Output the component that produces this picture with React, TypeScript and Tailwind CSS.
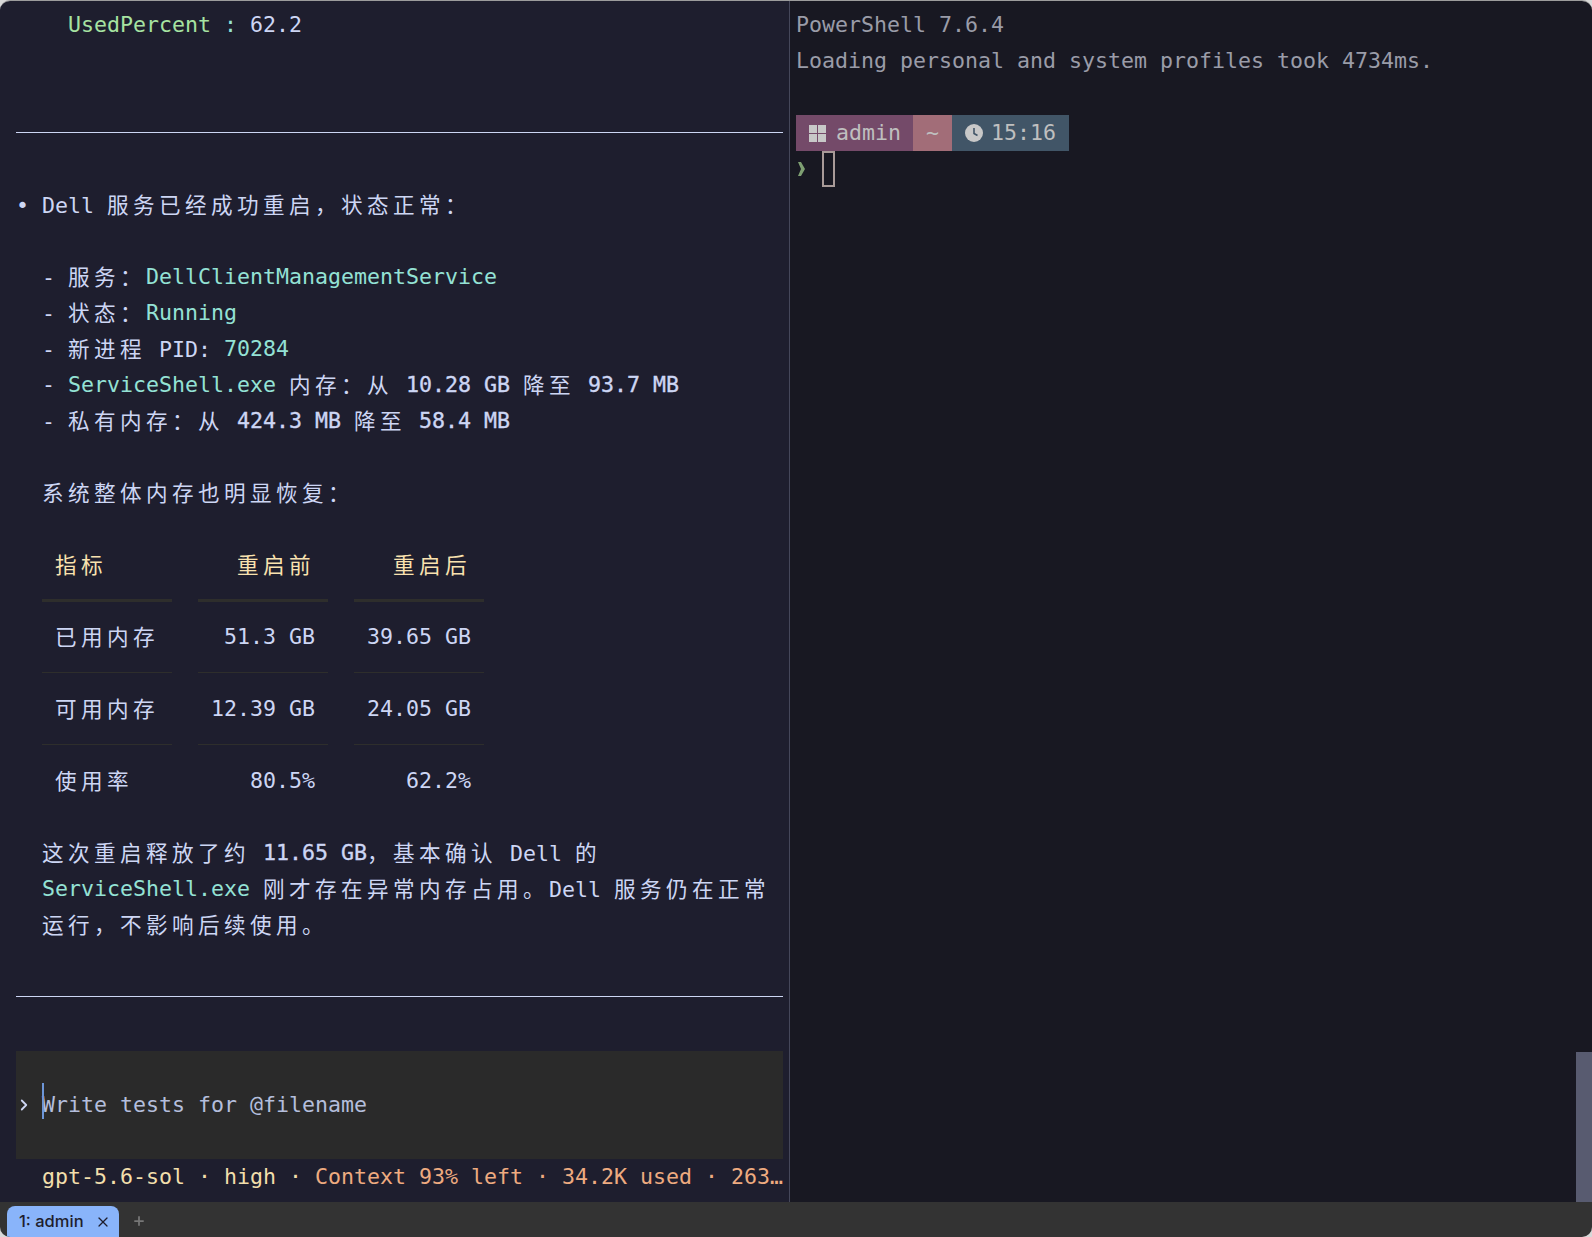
import { ChevronRight, Plus, X } from "lucide-react";
import type { ReactNode } from "react";

// CJK glyphs take two terminal cells (26px), everything else one (13px)
function T({ children, className = "" }: { children: string; className?: string }) {
  const parts = children.split(/([\u3000-\u9fff\uff00-\uffef]+)/);
  return (
    <span className={className}>
      {parts.map((p, i) =>
        i % 2 === 1 ? (
          <span key={i} className="font-['Noto_Sans_CJK_SC',sans-serif] tracking-[4.4px]">
            {p}
          </span>
        ) : (
          p
        )
      )}
    </span>
  );
}

function Row({ children, className = "" }: { children?: ReactNode; className?: string }) {
  return <div className={`flex h-9 shrink-0 items-center whitespace-pre ${className}`}>{children}</div>;
}

const Code = ({ children }: { children: string }) => <T className="text-[#94e2d5]">{children}</T>;
const B = ({ children }: { children: string }) => <span className="[-webkit-text-stroke:0.35px]">{children}</span>;

function Rule() {
  return (
    <Row className="pb-[2px]">
      <div className="h-px w-full bg-[#cdd6f4]" />
    </Row>
  );
}

function TableRow({ cells, head }: { cells: string[]; head?: boolean }) {
  const color = head ? "text-[#f9e2af]" : "";
  return (
    <Row className="gap-[26px]">
      <div className={`w-[130px] px-[13px] ${color}`}>
        <T>{cells[0]}</T>
      </div>
      <div className={`w-[130px] px-[13px] text-right ${color}`}>
        <T>{cells[1]}</T>
      </div>
      <div className={`w-[130px] px-[13px] text-right ${color}`}>
        <T>{cells[2]}</T>
      </div>
    </Row>
  );
}

function TableRule({ thick }: { thick?: boolean }) {
  const line = thick ? "h-[3px] w-[130px] bg-[#2e2e2c]" : "h-px w-[130px] bg-[#2e2e2c]";
  return (
    <Row className="gap-[26px] pb-[2px]">
      <div className={line} />
      <div className={line} />
      <div className={line} />
    </Row>
  );
}

function LeftPane() {
  return (
    <div className="flex w-[789px] shrink-0 flex-col overflow-hidden bg-[#1e1e2e] pl-4 pr-[6px] pt-[6px] text-[#cdd6f4]">
      <Row>
        <span className="text-[#a6e3a1]">{"    UsedPercent"}</span>
        <span className="text-[#94e2d5]"> : </span>
        <span>62.2</span>
      </Row>
      <Row />
      <Row />
      <Rule />
      <Row />
      <Row>
        <T>{"• Dell 服务已经成功重启，状态正常："}</T>
      </Row>
      <Row />
      <Row>
        <T>{"  - 服务："}</T>
        <Code>DellClientManagementService</Code>
      </Row>
      <Row>
        <T>{"  - 状态："}</T>
        <Code>Running</Code>
      </Row>
      <Row>
        <T>{"  - 新进程 PID: "}</T>
        <Code>70284</Code>
      </Row>
      <Row>
        <T>{"  - "}</T>
        <Code>ServiceShell.exe</Code>
        <T>{" 内存：从 "}</T>
        <B>10.28 GB</B>
        <T>{" 降至 "}</T>
        <B>93.7 MB</B>
      </Row>
      <Row>
        <T>{"  - 私有内存：从 "}</T>
        <B>424.3 MB</B>
        <T>{" 降至 "}</T>
        <B>58.4 MB</B>
      </Row>
      <Row />
      <Row>
        <T>{"  系统整体内存也明显恢复："}</T>
      </Row>
      <Row />
      <div className="ml-[26px] flex flex-col">
        <TableRow head cells={["指标", "重启前", "重启后"]} />
        <TableRule thick />
        <TableRow cells={["已用内存", "51.3 GB", "39.65 GB"]} />
        <TableRule />
        <TableRow cells={["可用内存", "12.39 GB", "24.05 GB"]} />
        <TableRule />
        <TableRow cells={["使用率", "80.5%", "62.2%"]} />
      </div>
      <Row />
      <Row>
        <T>{"  这次重启释放了约 "}</T>
        <B>11.65 GB</B>
        <T>{"，基本确认 Dell 的"}</T>
      </Row>
      <Row>
        <Code>{"  ServiceShell.exe"}</Code>
        <T>{" 刚才存在异常内存占用。Dell 服务仍在正常"}</T>
      </Row>
      <Row>
        <T>{"  运行，不影响后续使用。"}</T>
      </Row>
      <Row />
      <Rule />
      <Row />
      <div className="flex h-[108px] shrink-0 items-center bg-[#2a2a2a] text-[#b4bedc]">
        <span className="-ml-px w-[27px] text-[#cdd6f4]">
          <ChevronRight size={18} strokeWidth={2.4} />
        </span>
        <span className="relative whitespace-pre">
          <span className="absolute left-0 top-[-6px] h-9 w-[2px] bg-[#6d96d8]" />
          Write tests for @filename
        </span>
      </div>
      <Row className="overflow-hidden">
        <span className="text-[#f2dfac]">{"  gpt-5.6-sol · high · "}</span>
        <span className="text-[#eeab80]">{"Context 93% left · 34.2K used · 263…"}</span>
      </Row>
    </div>
  );
}

function RightPane() {
  return (
    <div className="flex min-w-0 flex-1 border-l border-[#45475a] bg-[#181822]">
      <div className="flex min-w-0 flex-1 flex-col pl-[6px] pt-[6px] text-[#9a9ca8]">
        <Row>PowerShell 7.6.4</Row>
        <Row>Loading personal and system profiles took 4734ms.</Row>
        <Row />
        <Row className="text-[#bfbfbf]">
          <div className="flex h-9 w-[117px] items-center gap-[10px] bg-[#744a69] pl-[13px]">
            <svg width="17" height="17" viewBox="0 0 17 17" fill="#c8c8c8">
              <rect width="8" height="8" />
              <rect x="9" width="8" height="8" />
              <rect y="9" width="8" height="8" />
              <rect x="9" y="9" width="8" height="8" />
            </svg>
            admin
          </div>
          <div className="flex h-9 w-[39px] items-center justify-center bg-[#a26d78]">~</div>
          <div className="flex h-9 w-[117px] items-center gap-[8px] bg-[#415567] pl-[13px]">
            <svg width="18" height="18" viewBox="0 0 18 18">
              <circle cx="9" cy="9" r="9" fill="#c8c8c8" />
              <path d="M9 4v5.5l3.5 2" stroke="#415567" strokeWidth="1.6" fill="none" />
            </svg>
            15:16
          </div>
        </Row>
        <Row>
          <svg width="13" height="16" viewBox="0 0 13 16" fill="#7e9f72" className="-ml-px">
            <polygon points="3,1 6,1 10,8 6,15 3,15 6,8" />
          </svg>
          <div className="ml-[14px] h-9 w-[13px] border-2 border-[#a89a98]" />
        </Row>
      </div>
      <div className="flex w-4 shrink-0 flex-col justify-end">
        <div className="h-[150px] bg-[#585b70]" />
      </div>
    </div>
  );
}

export default function App() {
  return (
    <div className="h-[1237px] w-full overflow-hidden bg-[#d8d8d8]">
      <div className="flex h-full flex-col overflow-hidden rounded-[10px] border-t border-[#9c9c9c] font-['DejaVu_Sans_Mono',monospace] text-[21.6px]">
        <div className="flex min-h-0 flex-1">
          <LeftPane />
          <RightPane />
        </div>
        <div className="flex h-[35px] shrink-0 items-end bg-[#333333] pl-[7px] font-['Inter',sans-serif] text-[16.5px]">
          <div className="flex h-[31px] w-[112px] items-center justify-between rounded-t-[8px] bg-[#89b4fa] pl-3 pr-2 font-medium text-[#1e1e2e]">
            1: admin
            <X size={16} strokeWidth={1.8} />
          </div>
          <Plus size={14} strokeWidth={3} className="mb-[9px] ml-[13px] text-[#777777]" />
        </div>
      </div>
    </div>
  );
}
